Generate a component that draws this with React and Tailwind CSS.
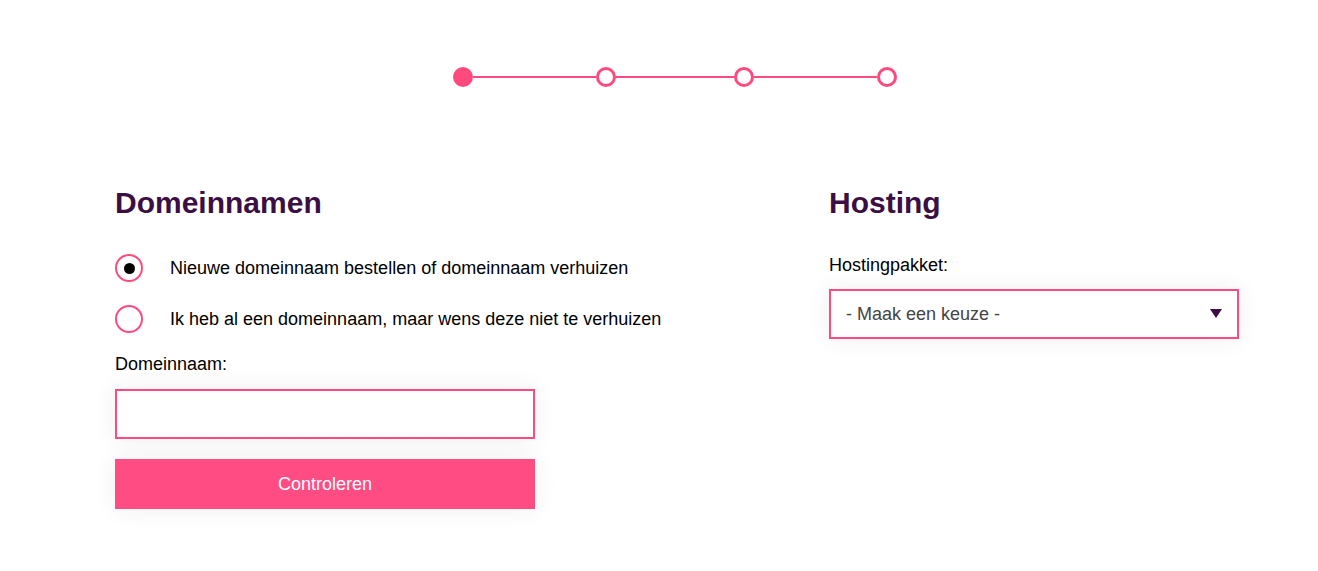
const Step = ({ filled }) =>
	filled ? (
		<div className="w-5 h-5 rounded-full bg-[#ff4a7d] shrink-0" />
	) : (
		<div className="w-5 h-5 rounded-full border-[3px] border-[#ff4a7d] bg-white shrink-0" />
	)

const Line = ({ w }) => <div className={`h-[2px] bg-[#ff4a7d] ${w}`} />

const Radio = ({ checked, label }) => (
	<label className="flex items-center h-[30px]">
		<span className="w-7 h-7 rounded-full border-2 border-[#ff4a7d] flex items-center justify-center bg-white shrink-0">
			{checked && <span className="w-[11px] h-[11px] rounded-full bg-black" />}
		</span>
		<span className="ml-[27px] text-[18px] text-black">{label}</span>
	</label>
)

const App = () => {
	return (
		<div
			className="w-full min-h-[571px] bg-white"
			style={{ fontFamily: '"Liberation Sans", Arial, sans-serif' }}
		>
			<div className="pt-[67px] pl-[453px] flex items-center">
				<Step filled />
				<Line w="w-[123px]" />
				<Step />
				<Line w="w-[118px]" />
				<Step />
				<Line w="w-[123px]" />
				<Step />
			</div>

			<div className="flex pl-[115px] pt-[99px]">
				<div className="w-[714px]">
					<h2 className="text-[30px] leading-[34px] font-bold text-[#3b0f43]">
						Domeinnamen
					</h2>
					<div className="mt-[33px] flex flex-col gap-[21px]">
						<Radio checked label="Nieuwe domeinnaam bestellen of domeinnaam verhuizen" />
						<Radio label="Ik heb al een domeinnaam, maar wens deze niet te verhuizen" />
					</div>
					<div className="mt-[20px] text-[18px] leading-[20px] text-black">Domeinnaam:</div>
					<input
						type="text"
						className="mt-[15px] block w-[420px] h-[50px] border-2 border-[#ff4a7d] bg-white shadow-[0_0_24px_rgba(0,0,0,0.07)] outline-none px-3"
					/>
					<button className="mt-[20px] w-[420px] h-[50px] bg-[#ff4d84] text-white text-[18px] shadow-[0_0_24px_rgba(0,0,0,0.07)]">
						Controleren
					</button>
				</div>

				<div className="w-[410px]">
					<h2 className="text-[30px] leading-[34px] font-bold text-[#3b0f43]">Hosting</h2>
					<div className="mt-[35px] text-[18px] leading-[20px] text-black">Hostingpakket:</div>
					<div className="mt-[14px] h-[50px] border-2 border-[#ff4a7d] bg-white shadow-[0_0_24px_rgba(0,0,0,0.07)] flex items-center justify-between pl-[15px] pr-[15px]">
						<span className="text-[18px] text-[#444]">- Maak een keuze -</span>
						<svg width="12" height="10" viewBox="0 0 12 10">
							<path d="M0 0 L12 0 L6 9 Z" fill="#3b0f43" />
						</svg>
					</div>
				</div>
			</div>
		</div>
	)
}

export default App
